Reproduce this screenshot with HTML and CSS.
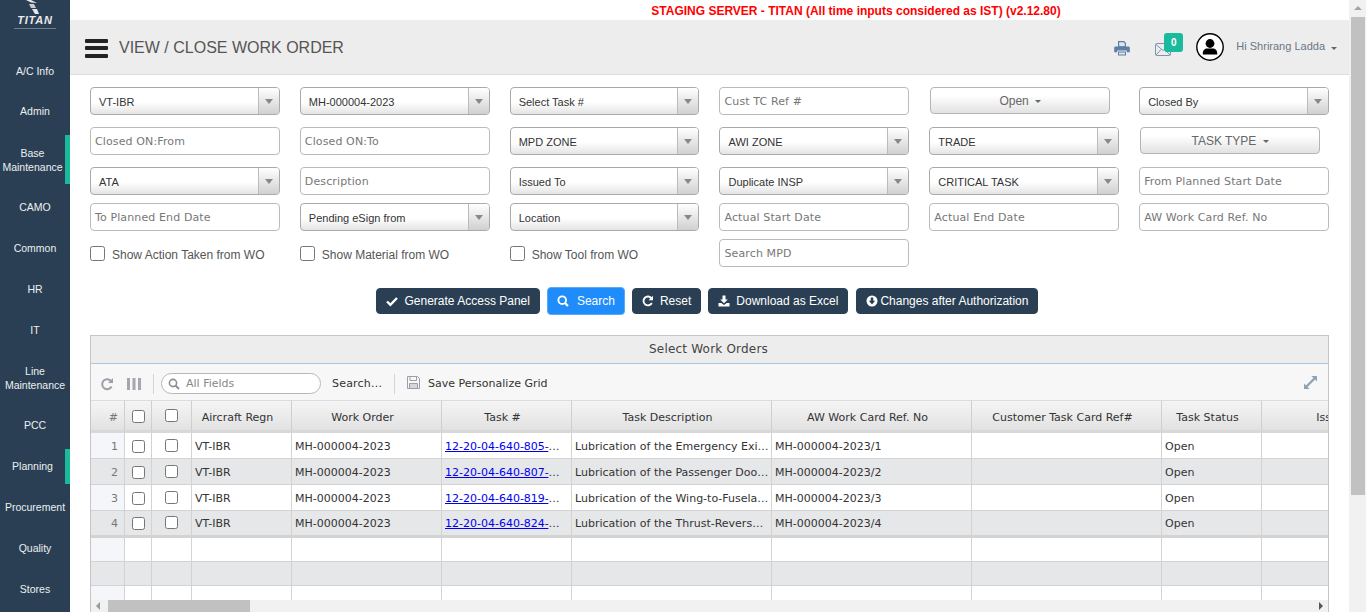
FILE: index.html
```html
<!DOCTYPE html>
<html lang="en">
<head>
<meta charset="utf-8">
<title>View / Close Work Order</title>
<link rel="stylesheet" href="styles.css">
</head>
<body>
<div class="app">
  <aside class="sidebar">
    <div class="logo">
      <svg class="logo-mark" width="14" height="14" viewBox="0 0 14 14"><path d="M0 0h5l6 3-6-.5z" fill="#e8e8e8"/><path d="M3 4l5 0 2 4H5z" fill="#c8ccd0"/><path d="M6 9h5l2 5H9z" fill="#e8e8e8"/></svg>
      <div class="logo-name">TITAN</div>
      <div class="logo-line"></div>
    </div>
    <nav class="nav">
      <a class="nav-item">A/C Info</a>
      <a class="nav-item">Admin</a>
      <a class="nav-item nav-tall nav-active">Base<br>Maintenance</a>
      <a class="nav-item">CAMO</a>
      <a class="nav-item">Common</a>
      <a class="nav-item">HR</a>
      <a class="nav-item">IT</a>
      <a class="nav-item nav-tall">Line<br>Maintenance</a>
      <a class="nav-item">PCC</a>
      <a class="nav-item nav-active">Planning</a>
      <a class="nav-item">Procurement</a>
      <a class="nav-item">Quality</a>
      <a class="nav-item">Stores</a>
    </nav>
  </aside>

  <main class="main">
    <div class="notice">STAGING SERVER - TITAN (All time inputs considered as IST) (v2.12.80)</div>
    <header class="topbar">
      <span class="burger"><i></i><i></i><i></i></span>
      <h1 class="title">VIEW / CLOSE WORK ORDER</h1>
      <div class="top-actions">
        <svg class="ic-print" width="16" height="16" viewBox="0 0 16 16"><path d="M4 1h6l2 2v4H4z" fill="#5b7fa6"/><path d="M5.200 2.200v4h5.600V3.600L9.600 2.200z" fill="#dfe5ec"/><path d="M1.500 6.500h13a1.300 1.300 0 0 1 1.300 1.300v4.400h-3v-1.700H3.200v1.700h-3V7.800a1.300 1.300 0 0 1 1.300-1.300z" fill="#5b7fa6"/><path d="M4 11.500h8V15.500H4z" fill="#5b7fa6"/><path d="M5 12.500h6v2H5z" fill="#dfe5ec"/></svg>
        <span class="mail">
          <svg width="16" height="13" viewBox="0 0 16 13"><rect x=".5" y=".5" width="15" height="12" rx="1" fill="none" stroke="#7a94b2"/><path d="M1 1.500l7 6 7-6M1 12l5-5.500M15 12l-5-5.500" fill="none" stroke="#7a94b2"/></svg>
          <span class="badge">0</span>
        </span>
        <svg class="avatar" width="28" height="28" viewBox="0 0 28 28"><circle cx="14" cy="14" r="13.200" fill="#fff" stroke="#000" stroke-width="1.400"/><circle cx="14" cy="10.500" r="4.400" fill="#000"/><path d="M6.800 20.500c0-3.600 2.300-5 4.200-5h6c1.900 0 4.200 1.400 4.200 5v1H6.800z" fill="#000"/></svg>
        <span class="username">Hi Shrirang Ladda</span>
        <span class="caret"></span>
      </div>
    </header>

    <section class="content">
      <div class="filters">
        <div class="frow">
          <div class="sel">VT-IBR</div>
          <div class="sel">MH-000004-2023</div>
          <div class="sel">Select Task #</div>
          <input class="inp" placeholder="Cust TC Ref #">
          <button class="drop">Open <span class="caret"></span></button>
          <div class="sel">Closed By</div>
        </div>
        <div class="frow">
          <input class="inp" placeholder="Closed ON:From">
          <input class="inp" placeholder="Closed ON:To">
          <div class="sel">MPD ZONE</div>
          <div class="sel">AWI ZONE</div>
          <div class="sel">TRADE</div>
          <button class="drop">TASK TYPE <span class="caret"></span></button>
        </div>
        <div class="frow">
          <div class="sel">ATA</div>
          <input class="inp" placeholder="Description">
          <div class="sel">Issued To</div>
          <div class="sel">Duplicate INSP</div>
          <div class="sel">CRITICAL TASK</div>
          <input class="inp" placeholder="From Planned Start Date">
        </div>
        <div class="frow frow-tight">
          <input class="inp" placeholder="To Planned End Date">
          <div class="sel">Pending eSign from</div>
          <div class="sel">Location</div>
          <input class="inp" placeholder="Actual Start Date">
          <input class="inp" placeholder="Actual End Date">
          <input class="inp" placeholder="AW Work Card Ref. No">
        </div>
        <div class="frow frow-tight">
          <label class="chk"><span class="box"></span>Show Action Taken from WO</label>
          <label class="chk"><span class="box"></span>Show Material from WO</label>
          <label class="chk"><span class="box"></span>Show Tool from WO</label>
          <input class="inp" placeholder="Search MPD">
        </div>
      </div>

      <div class="btns">
        <button class="btn"><svg class="bi" width="12" height="12" viewBox="0 0 12 12"><path d="M1 6.500l3.400 3.400L11 3" fill="none" stroke="#fff" stroke-width="2.400"/></svg>Generate Access Panel</button>
        <button class="btn btn-primary"><svg class="bi" width="12" height="12" viewBox="0 0 12 12"><circle cx="5.200" cy="5.200" r="3.800" fill="none" stroke="#fff" stroke-width="1.900"/><path d="M8 8l3 3" stroke="#fff" stroke-width="2.200"/></svg>Search</button>
        <button class="btn btn-m"><svg class="bi" width="12" height="12" viewBox="0 0 12 12"><path d="M9.800 8a4.400 4.400 0 1 1-.3-4.600" fill="none" stroke="#fff" stroke-width="1.900"/><path d="M11 .8v4.400H6.600z" fill="#fff"/></svg>Reset</button>
        <button class="btn btn-m"><svg class="bi" width="12" height="12" viewBox="0 0 12 12"><path d="M4.500 .5h3v4h2.300L6 8.300 2.200 4.500h2.300z" fill="#fff"/><path d="M.5 8h2.800L6 10l2.700-2h2.800v3.500H.5z" fill="#fff"/></svg>Download as Excel</button>
        <button class="btn btn-tight"><svg class="bi" width="12" height="12" viewBox="0 0 12 12"><circle cx="6" cy="6" r="5.500" fill="#fff"/><path d="M4.700 2.600h2.600v3.200h1.900L6 9.400 2.800 5.800h1.900z" fill="#2a3f54"/></svg>Changes after Authorization</button>
      </div>

      <div class="grid">
        <div class="caption">Select Work Orders</div>
        <div class="toolbar">
          <svg class="tool-ic" width="14" height="14" viewBox="0 0 14 14"><path d="M11.600 9.500a5 5 0 1 1-.4-5.300" fill="none" stroke="#9aa0a6" stroke-width="2"/><path d="M13 1v5H8z" fill="#9aa0a6"/></svg>
          <svg class="tool-ic tool-cols" width="14" height="12" viewBox="0 0 14 12"><path d="M0 0h3v12H0zM5.500 0h3v12h-3zM11 0h3v12h-3z" fill="#a4a8ac"/></svg>
          <span class="tsep"></span>
          <div class="tsearch">
            <svg width="12" height="12" viewBox="0 0 12 12"><circle cx="5" cy="5" r="3.600" fill="none" stroke="#8a9097" stroke-width="1.600"/><path d="M7.600 7.600l3.400 3.400" stroke="#8a9097" stroke-width="2"/></svg>
            <span>All Fields</span>
          </div>
          <span class="tlabel tlabel-wide">Search...</span>
          <span class="tsep tsep-wide"></span>
          <svg class="save-ic" width="13" height="13" viewBox="0 0 13 13"><path d="M.5.500h10l2 2v10H.5z" fill="none" stroke="#9aa0a6"/><path d="M3 .5h6.500v4H3z" fill="none" stroke="#9aa0a6"/><path d="M2.500 7.500h8v5h-8z" fill="#d4d7da" stroke="#9aa0a6"/></svg>
          <span class="tlabel">Save Personalize Grid</span>
          <svg class="expand" width="13" height="13" viewBox="0 0 14 14"><path d="M8 0h6v6l-2.100-2.100L3.900 11.900 6 14H0V8l2.100 2.100L10.100 2.100z" fill="#8fa3b5"/></svg>
        </div>
        <div class="table-clip">
          <table class="tbl">
            <colgroup>
              <col class="c-n"><col class="c-a"><col class="c-b"><col class="c-reg"><col class="c-wo"><col class="c-task"><col class="c-desc"><col class="c-aw"><col class="c-cust"><col class="c-st"><col class="c-is">
            </colgroup>
            <thead>
              <tr>
                <th class="num">#</th><th class="cb"><span class="box box-sm"></span></th><th class="cb cb-up"><span class="box box-sm"></span></th>
                <th>Aircraft Regn</th><th>Work Order</th><th>Task #</th><th>Task Description</th><th>AW Work Card Ref. No</th><th>Customer Task Card Ref#</th><th>Task Status</th><th>Issued To</th>
              </tr>
            </thead>
            <tbody>
              <tr>
                <td class="num">1</td><td class="cb"><span class="box box-sm"></span></td><td class="cb"><span class="box box-sm"></span></td>
                <td>VT-IBR</td><td>MH-000004-2023</td><td><a class="tlink">12-20-04-640-805-W01</a></td><td>Lubrication of the Emergency Exit Hatch</td><td>MH-000004-2023/1</td><td></td><td>Open</td><td></td>
              </tr>
              <tr>
                <td class="num">2</td><td class="cb"><span class="box box-sm"></span></td><td class="cb"><span class="box box-sm"></span></td>
                <td>VT-IBR</td><td>MH-000004-2023</td><td><a class="tlink">12-20-04-640-807-W01</a></td><td>Lubrication of the Passenger Door Hinge</td><td>MH-000004-2023/2</td><td></td><td>Open</td><td></td>
              </tr>
              <tr>
                <td class="num">3</td><td class="cb"><span class="box box-sm"></span></td><td class="cb"><span class="box box-sm"></span></td>
                <td>VT-IBR</td><td>MH-000004-2023</td><td><a class="tlink">12-20-04-640-819-W01</a></td><td>Lubrication of the Wing-to-Fuselage Seal</td><td>MH-000004-2023/3</td><td></td><td>Open</td><td></td>
              </tr>
              <tr class="last">
                <td class="num">4</td><td class="cb"><span class="box box-sm"></span></td><td class="cb"><span class="box box-sm"></span></td>
                <td>VT-IBR</td><td>MH-000004-2023</td><td><a class="tlink">12-20-04-640-824-W01</a></td><td>Lubrication of the Thrust-Reverser Door</td><td>MH-000004-2023/4</td><td></td><td>Open</td><td></td>
              </tr>
              <tr class="blank"><td class="num"></td><td></td><td></td><td></td><td></td><td></td><td></td><td></td><td></td><td></td><td></td></tr>
              <tr class="blank"><td class="num"></td><td></td><td></td><td></td><td></td><td></td><td></td><td></td><td></td><td></td><td></td></tr>
              <tr class="blank"><td class="num"></td><td></td><td></td><td></td><td></td><td></td><td></td><td></td><td></td><td></td><td></td></tr>
            </tbody>
          </table>
        </div>
        <div class="hscroll">
          <span class="arrow-l"></span>
          <span class="hthumb"></span>
          <span class="arrow-r"></span>
        </div>
      </div>
    </section>
  </main>

  <div class="vscroll">
    <span class="arrow-u"></span>
    <span class="vthumb"></span>
  </div>
</div>
</body>
</html>
```

FILE: styles.css
```css
* { box-sizing: border-box; }
html, body { margin: 0; height: 612px; overflow: hidden; background: #fff; }
body { font-family: "Liberation Sans", Arial, sans-serif; color: #333; }

.app { display: flex; width: 1366px; height: 612px; overflow: hidden; }

/* sidebar */
.sidebar { flex: 0 0 70px; background: #2a3f54; display: flex; flex-direction: column; align-items: stretch; }
.logo { height: 53px; display: flex; flex-direction: column; align-items: center; }
.logo-mark { display: block; margin-left: -5px; flex: none; }
.logo-name { font: italic bold 11px/11px "Liberation Sans", sans-serif; color: #eaeaea; letter-spacing: .8px; margin-top: 1px; }
.logo-line { width: 42px; height: 1px; background: #6f7e8e; margin-top: 2px; }
.nav { display: flex; flex-direction: column; gap: 5.850px; }
.nav-item { height: 35px; display: flex; align-items: center; justify-content: center; text-align: center; font-size: 10.500px; line-height: 14px; color: #ecf0f1; }
.nav-tall { height: 49px; padding-top: 1px; }
.nav-active { border-right: 5px solid #1abb9c; }

/* main */
.main { flex: 0 0 1279px; display: flex; flex-direction: column; min-width: 0; }
.notice { height: 20px; text-align: center; font-size: 12px; line-height: 22px; font-weight: bold; color: #f00; padding-left: 293px; white-space: nowrap; }
.topbar { height: 57px; background: #ededed; border-bottom: 1px solid #d9dee4; display: flex; align-items: center; padding: 2px 12px 0 15px; }
.burger { display: flex; flex-direction: column; gap: 3.500px; width: 23px; margin-right: 11px; }
.burger i { display: block; height: 4px; background: #222; border-radius: 1px; }
.title { margin: 0; font-size: 16px; font-weight: normal; color: #555; }
.top-actions { margin-left: auto; display: flex; align-items: center; }
.ic-print { margin-right: 25px; }
.mail { position: relative; display: block; width: 16px; height: 13px; margin-top: 2px; margin-right: 25px; }
.mail svg { display: block; }
.badge { position: absolute; left: 9px; top: -10px; width: 19px; height: 19px; border-radius: 3px; background: #1abb9c; color: #fff; font-size: 10px; font-weight: bold; line-height: 19px; text-align: center; }
.avatar { margin-right: 12px; margin-top: -2px; }
.username { font-size: 11px; color: #6b7785; margin-right: 3px; margin-top: -4px; }
.caret { display: inline-block; width: 0; height: 0; border-left: 3px solid transparent; border-right: 3px solid transparent; border-top: 3px solid currentColor; vertical-align: 2px; margin-left: 3px; color: #666; }

/* filters */
.content { padding: 12px 20px 0; display: flex; flex-direction: column; }
.filters { display: flex; flex-direction: column; gap: 12px; }
.frow { display: grid; grid-template-columns: repeat(6, 1fr); column-gap: 20px; height: 28px; }
.frow-tight { margin-top: -4px; }
.sel { height: 28px; border: 1px solid #aaa; border-radius: 4px; background: linear-gradient(#fff 55%, #e4e4e4); font-size: 11px; line-height: 28px; padding-left: 8px; color: #333; position: relative; white-space: nowrap; }
.sel::before { content: ""; position: absolute; right: 0; top: 0; bottom: 0; width: 20px; border-left: 1px solid #bbb; background: linear-gradient(#fff, #d0d0d0); border-radius: 0 3px 3px 0; }
.sel::after { content: ""; position: absolute; right: 6px; top: 11px; border-left: 4px solid transparent; border-right: 4px solid transparent; border-top: 5px solid #888; }
.inp { width: 100%; height: 28px; border: 1px solid #bbb; border-radius: 4px; padding: 0 4px; font: 11px "DejaVu Sans", sans-serif; letter-spacing: .12px; background: #fff; outline: 0; }
.inp::placeholder { color: #777; opacity: 1; }
.drop { height: 27px; border: 1px solid #b5b5b5; border-radius: 4px; background: linear-gradient(#fff 30%, #e2e2e2); font: 12px "Liberation Sans", sans-serif; color: #666; padding: 0; text-align: center; margin: 0 9px 0 1px; }
.chk { display: flex; align-items: flex-start; font-size: 12px; color: #555; padding-top: 8px; line-height: 16px; white-space: nowrap; }
.box { display: block; flex: none; width: 15px; height: 15px; border: 1px solid #767676; border-radius: 2.500px; background: #fff; margin-right: 7px; }
.chk .box { margin-top: -1px; }
.box-sm { width: 13px; height: 13px; margin: 0 auto; }

/* action buttons */
.btns { display: flex; justify-content: center; gap: 7px; margin-top: 20px; padding-right: 5px; align-items: center; height: 28px; }
.btn { height: 26px; border: 1px solid #2a3f54; border-radius: 4px; background: #2a3f54; color: #fff; font: 12px "Liberation Sans", sans-serif; padding: 0 9px; display: flex; align-items: center; white-space: nowrap; }
.bi { margin-right: 7px; flex: none; }
.btn-m .bi { margin-right: 6px; }
.btn-primary { height: 28px; background: #1e8cfb; border: 1px solid #5aa9f8; }
.btn-primary .bi { margin-right: 8px; }
.btn-tight { margin-left: 1px; }
.btn-tight .bi { margin-right: 2px; }

/* grid */
.grid { margin-top: 20px; border: 1px solid #c5c5c5; border-bottom: 0; width: 1239px; }
.caption { height: 28px; background: #ededed; border-bottom: 1px solid #a6c9e2; text-align: center; font: 12px/26px "DejaVu Sans", sans-serif; letter-spacing: .2px; padding-right: 2px; color: #444; }
.toolbar { height: 37px; background: #f7f7f7; display: flex; align-items: center; padding: 3px 0 0 9px; border-bottom: 1px solid #dcdcdc; font: 11px "DejaVu Sans", sans-serif; color: #333; }
.tool-ic { margin-right: 13px; flex: none; }
.tool-cols { margin-right: 12px; }
.tsep { width: 1px; height: 20px; background: #d5d5d5; margin-right: 7px; flex: none; }
.tsep-wide { margin-right: 12px; }
.tsearch { width: 160px; height: 21px; border: 1px solid #b8b8b8; border-radius: 11px; background: #fff; display: flex; align-items: center; padding-left: 6px; gap: 6px; color: #888; margin-right: 11px; }
.tlabel { margin-right: 12px; white-space: nowrap; }
.tlabel-wide { letter-spacing: .2px; }
.save-ic { margin-right: 8px; flex: none; margin-top: -3px; }
.expand { margin-left: auto; margin-right: 11px; margin-top: -3px; }

.table-clip { overflow: hidden; height: 199px; }
.tbl { border-collapse: separate; border-spacing: 0; table-layout: fixed; width: 1339px; font: 11px "DejaVu Sans", sans-serif; }
.c-n { width: 34px; } .c-a { width: 27px; } .c-b { width: 40px; } .c-reg { width: 100px; } .c-wo { width: 150px; } .c-task { width: 130px; } .c-desc { width: 200px; } .c-aw { width: 200px; } .c-cust { width: 190px; } .c-st { width: 100px; } .c-is { width: 168px; }
th { height: 32px; padding: 3px 8px 0 0; font-weight: normal; color: #333; border-right: 1px solid #cfcfcf; border-bottom: 3px solid #d8d8d8; background: linear-gradient(#f5f5f5, #e2e2e2); white-space: nowrap; overflow: hidden; }
td { height: 26px; padding: 1px 2px 0 3px; color: #333; border-right: 1px solid #d3d3d3; border-bottom: 1px solid #d3d3d3; white-space: nowrap; overflow: hidden; text-overflow: ellipsis; }
tbody tr:nth-child(even) td { background: #e6e7e9; }
.num { text-align: right; color: #777; background: #f4f6f9; }
td.num { padding-right: 6px; }
th.num { background: linear-gradient(#f5f5f5, #e2e2e2); padding-right: 6px; }
th.cb, td.cb { padding: 1px 0 0; }
th.cb-up .box, td.cb + td.cb .box { position: relative; top: -1px; }
.last td { border-bottom: 3px solid #d3d3d3; height: 27px; }
.blank td { height: 24px; }
.tlink { color: #0000ee; text-decoration: underline; }

.hscroll { height: 12px; background: #f1f1f1; display: flex; align-items: center; }
.arrow-l { width: 0; height: 0; border-top: 4px solid transparent; border-bottom: 4px solid transparent; border-right: 4px solid #999; margin-left: 5px; }
.hthumb { width: 142px; height: 12px; background: #c1c1c1; margin-left: 8px; }
.arrow-r { width: 0; height: 0; border-top: 4px solid transparent; border-bottom: 4px solid transparent; border-left: 4px solid #555; margin-left: auto; margin-right: 5px; }

.vscroll { flex: 0 0 17px; background: #f1f1f1; display: flex; flex-direction: column; align-items: center; }
.arrow-u { width: 0; height: 0; border-left: 4px solid transparent; border-right: 4px solid transparent; border-bottom: 4px solid #a3a3a3; margin: 6px 0 7px; }
.vthumb { width: 14px; height: 478px; background: #c1c1c1; }
```
